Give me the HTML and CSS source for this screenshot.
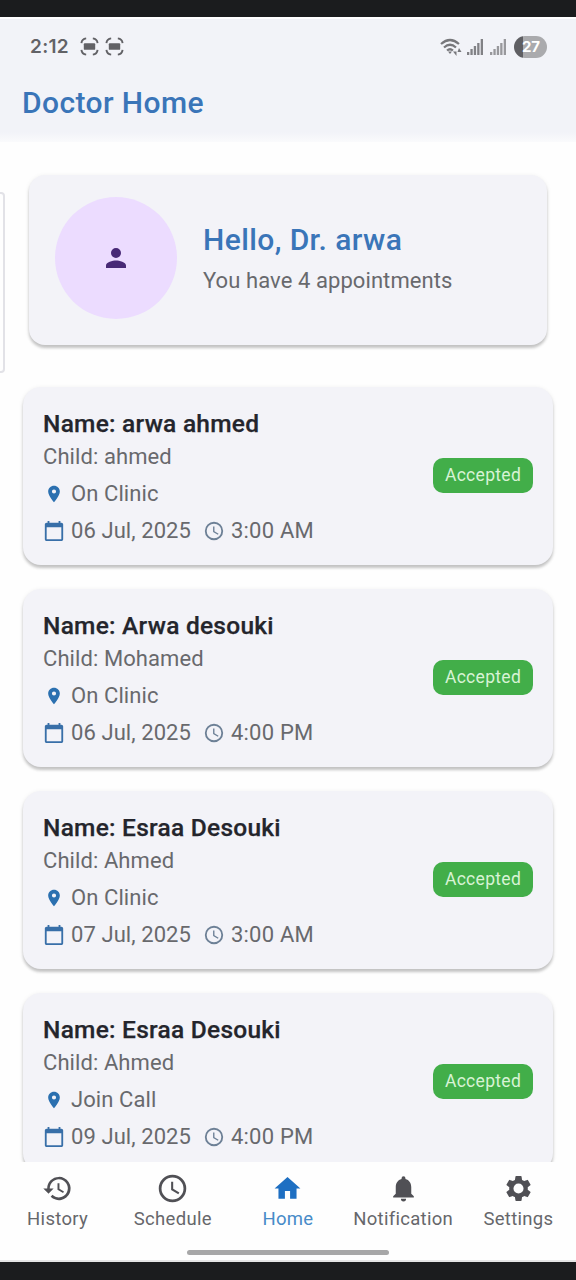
FILE: index.html
```html
<!DOCTYPE html>
<html lang="en">
<head>
<meta charset="utf-8">
<title>Doctor Home</title>
<link rel="stylesheet" href="styles.css">
</head>
<body>
<svg class="defs" width="0" height="0">
  <symbol id="pin" viewBox="0 0 24 24"><path d="M12 2C8.1 2 5 5.100 5 9c0 5.300 7 13 7 13s7-7.700 7-13c0-3.900-3.100-7-7-7zm0 9.500a2.500 2.500 0 1 1 0-5 2.500 2.500 0 0 1 0 5z"/></symbol>
  <symbol id="cal" viewBox="0 0 24 24"><path d="M20 3h-1V1h-2v2H7V1H5v2H4c-1.100 0-2 .9-2 2v16c0 1.100.9 2 2 2h16c1.100 0 2-.9 2-2V5c0-1.100-.9-2-2-2zm0 18H4V8h16v13z"/></symbol>
  <symbol id="clock" viewBox="0 0 24 24"><path d="M12 2a10 10 0 1 0 0 20 10 10 0 0 0 0-20zm0 18a8 8 0 1 1 0-16 8 8 0 0 1 0 16zm.5-13H11v6l5.200 3.200.8-1.300-4.500-2.700z"/></symbol>
  <symbol id="scan" viewBox="0 0 20 20"><path d="M1.500 6.500Q2 2 6.500 1.500M13.500 1.500Q18 2 18.500 6.500M1.500 13.500Q2 18 6.500 18.500M13.500 18.500Q18 18 18.500 13.500" fill="none" stroke="currentColor" stroke-width="2"/><rect x="4" y="6.500" width="12" height="7" rx="1"/></symbol>
  <symbol id="bars" viewBox="0 0 16 17"><path d="M0 14h2.300v3H0zM3.400 11h2.300v6H3.400zM6.800 8h2.300v9H6.800zM10.200 5h2.300v12h-2.300zM13.700 1H16v16h-2.300z"/></symbol>
</svg>
<div class="phone">
  <header class="top">
    <div class="status">
      <span class="time">2:12</span>
      <svg class="scan"><use href="#scan"/></svg>
      <svg class="scan"><use href="#scan"/></svg>
      <span class="grow"></span>
      <svg class="wifi" viewBox="0 0 22 18"><path d="M1 6Q10 -2 19 6M4 9.500Q10 4 16 9.500M7 12.500Q10 10 13 12.500" fill="none" stroke="currentColor" stroke-width="2.200"/><path d="M8 13.500h4l-2 2.500zM13 13.500h3.500v4.500zM19 10l2.500 4h-4z"/></svg>
      <svg class="bars"><use href="#bars"/></svg>
      <svg class="bars second"><use href="#bars"/></svg>
      <span class="battery">27</span>
    </div>
    <h1 class="title">Doctor Home</h1>
  </header>
  <main class="content">
    <div class="drawer-edge"></div>
    <section class="hello">
      <div class="avatar"><svg viewBox="0 0 24 24"><path d="M12 12a4 4 0 1 0 0-8 4 4 0 0 0 0 8zm0 2c-2.700 0-8 1.300-8 4v2h16v-2c0-2.700-5.300-4-8-4z"/></svg></div>
      <div><h2 class="greeting">Hello, Dr. arwa</h2><p class="count">You have 4 appointments</p></div>
    </section>
    <article class="card">
      <div class="info"><h3 class="name">Name: arwa ahmed</h3><p class="child">Child: ahmed</p>
        <p class="row place"><svg class="pin"><use href="#pin"/></svg><span>On Clinic</span></p>
        <p class="row"><svg class="cal"><use href="#cal"/></svg><span class="date">06 Jul, 2025</span><svg class="clock"><use href="#clock"/></svg><span class="hour">3:00 AM</span></p></div>
      <span class="badge">Accepted</span>
    </article>
    <article class="card">
      <div class="info"><h3 class="name">Name: Arwa desouki</h3><p class="child">Child: Mohamed</p>
        <p class="row place"><svg class="pin"><use href="#pin"/></svg><span>On Clinic</span></p>
        <p class="row"><svg class="cal"><use href="#cal"/></svg><span class="date">06 Jul, 2025</span><svg class="clock"><use href="#clock"/></svg><span class="hour">4:00 PM</span></p></div>
      <span class="badge">Accepted</span>
    </article>
    <article class="card">
      <div class="info"><h3 class="name">Name: Esraa Desouki</h3><p class="child">Child: Ahmed</p>
        <p class="row place"><svg class="pin"><use href="#pin"/></svg><span>On Clinic</span></p>
        <p class="row"><svg class="cal"><use href="#cal"/></svg><span class="date">07 Jul, 2025</span><svg class="clock"><use href="#clock"/></svg><span class="hour">3:00 AM</span></p></div>
      <span class="badge">Accepted</span>
    </article>
    <article class="card">
      <div class="info"><h3 class="name">Name: Esraa Desouki</h3><p class="child">Child: Ahmed</p>
        <p class="row place"><svg class="pin"><use href="#pin"/></svg><span>Join Call</span></p>
        <p class="row"><svg class="cal"><use href="#cal"/></svg><span class="date">09 Jul, 2025</span><svg class="clock"><use href="#clock"/></svg><span class="hour">4:00 PM</span></p></div>
      <span class="badge">Accepted</span>
    </article>
  </main>
  <nav class="nav">
    <a class="tab"><svg viewBox="0 0 24 24"><path d="M13 3a9 9 0 0 0-9 9H1l3.900 3.900.1.100L9 12H6a7 7 0 1 1 2.100 4.900l-1.400 1.400A9 9 0 1 0 13 3zm-1 5v5l4.300 2.500.7-1.200-3.500-2.100V8z"/></svg><span>History</span></a>
    <a class="tab"><svg class="large"><use href="#clock"/></svg><span>Schedule</span></a>
    <a class="tab active"><svg viewBox="0 0 24 24"><path d="M10 20v-6h4v6h5v-8h3L12 3 2 12h3v8z"/></svg><span>Home</span></a>
    <a class="tab solid"><svg viewBox="0 0 24 24"><path d="M12 22a2 2 0 0 0 2-2h-4a2 2 0 0 0 2 2zm6-6v-5c0-3.100-1.600-5.600-4.500-6.300V4a1.500 1.500 0 0 0-3 0v.7C7.600 5.400 6 7.900 6 11v5l-2 2v1h16v-1z"/></svg><span>Notification</span></a>
    <a class="tab solid"><svg viewBox="0 0 24 24"><path fill-rule="evenodd" d="M19.140 12.940c.04-.3.060-.61.060-.94s-.02-.64-.07-.94l2.030-1.580a.49.490 0 0 0 .12-.61l-1.920-3.320a.49.490 0 0 0-.59-.22l-2.390.96a7 7 0 0 0-1.620-.94l-.36-2.540a.48.480 0 0 0-.48-.41h-3.840a.48.480 0 0 0-.47.410l-.36 2.540c-.59.240-1.130.570-1.620.94l-2.390-.96a.48.480 0 0 0-.59.220L2.740 8.870a.48.480 0 0 0 .12.610l2.030 1.580a6 6 0 0 0-.02 1.880l-2.030 1.580a.49.490 0 0 0-.12.610l1.920 3.320c.12.220.37.290.59.220l2.390-.96c.5.380 1.030.7 1.620.94l.36 2.540c.05.240.24.410.48.410h3.840c.24 0 .44-.17.470-.41l.36-2.540a7 7 0 0 0 1.620-.94l2.390.96c.22.080.47 0 .59-.22l1.920-3.320a.48.480 0 0 0-.12-.61zM12 15.900a3.900 3.900 0 1 1 0-7.800 3.900 3.900 0 0 1 0 7.800z"/></svg><span>Settings</span></a>
  </nav>
  <div class="home-bar"><span></span></div>
</div>
</body>
</html>
```
FILE: styles.css
```css
* { box-sizing: border-box; }
body { margin: 0; background: #1b1c1e; font-family: Roboto, sans-serif; color: #68696d; }
h1, h2, h3, p { margin: 0; }
svg { fill: currentColor; flex: none; display: block; }
.defs { position: absolute; }
.phone { height: 1280px; border-top: 17px solid #1b1c1e; border-bottom: 18px solid #1b1c1e; background: #fefefe; display: flex; flex-direction: column; overflow: hidden; }
.top { height: 125px; flex: none; background: linear-gradient(#f2f3f8 113px, #fefefe 128px); border-top: 2px solid #fff; }
.status { height: 55px; padding: 0 29px 0 30px; display: flex; align-items: center; color: #626266; }
.time { font: 600 19px/24px Inter, sans-serif; width: 50px; white-space: nowrap; letter-spacing: .3px; }
.scan { width: 19px; height: 19px; margin-right: 6px; }
.grow { flex: 1; }
.wifi { width: 22px; height: 18px; margin-right: 5px; color: #77777b; }
.bars { width: 16px; height: 17px; margin-right: 7px; color: #818185; }
.bars.second { color: #98989c; margin-right: 8px; }
.battery { width: 33px; height: 22px; border-radius: 11px; background: linear-gradient(90deg, #5f5f63 27%, #aaaaad 28%); color: #fff; font: 700 15px/22px Inter, sans-serif; text-align: center; padding-left: 1px; }
.title { font-weight: 500; font-size: 30px; line-height: 34px; margin: 12px 0 0 22px; color: #3a75b8; letter-spacing: .4px; }
.content { flex: 1; min-height: 0; overflow: hidden; padding: 33px 23px 0; position: relative; }
.drawer-edge { position: absolute; left: -8px; top: 50px; width: 13px; height: 181px; border: 2px solid #e2e2e7; border-radius: 4px; }
.hello, .card { background: #f3f3f8; box-shadow: 0 3px 3px rgba(0, 0, 0, .2), 0 1px 5px rgba(0, 0, 0, .08); }
.hello { height: 170px; margin: 0 6px 42px; border-radius: 16px; display: flex; align-items: flex-start; padding: 22px 26px 0; }
.avatar { width: 122px; height: 122px; border-radius: 50%; background: #ecdcff; color: #482976; display: flex; align-items: center; justify-content: center; margin-right: 26px; }
.avatar svg { width: 30px; height: 30px; }
.greeting { font-weight: 500; font-size: 30px; line-height: 40px; margin-top: 23px; color: #3a75b8; letter-spacing: .4px; }
.count { font-size: 22px; line-height: 30px; margin-top: 6px; letter-spacing: .08px; }
.card { height: 178px; margin-bottom: 24px; border-radius: 18px; padding: 21px 20px 0 20px; display: flex; justify-content: space-between; }
.name { font-weight: 500; font-size: 24.500px; line-height: 32px; color: #24252c; letter-spacing: .25px; -webkit-text-stroke: .25px currentColor; }
.child, .row { font-size: 22px; letter-spacing: .08px; white-space: nowrap; }
.child { line-height: 34px; }
.row { height: 37px; line-height: 37px; display: flex; align-items: center; }
.place { margin-top: 1px; }
.pin { width: 22px; height: 20px; margin-right: 6px; color: #2b70b0; }
.cal { width: 22px; height: 22px; margin-right: 6px; color: #386fa8; }
.date { width: 132px; }
.clock { width: 22px; height: 22px; margin-right: 6px; color: #6d8096; }
.hour { letter-spacing: .2px; }
.badge { width: 100px; height: 35px; margin-top: 50px; border-radius: 10px; background: #42ae49; color: #d8f3d5; font-size: 17.500px; line-height: 35px; text-align: center; letter-spacing: .3px; }
.nav { height: 78px; flex: none; display: grid; grid-template-columns: repeat(5, 1fr); background: #fefefe; padding-top: 11px; }
.tab { display: flex; flex-direction: column; align-items: center; font-size: 18.500px; line-height: 24px; letter-spacing: .3px; color: #66676b; }
.tab svg { width: 31px; height: 31px; margin-bottom: 3px; color: #505055; }
.tab .large { width: 33px; height: 33px; margin: -1px 0 2px; }
.tab.active { color: #478bc8; }
.tab.active svg { color: #1e6fc2; }
.home-bar { height: 22px; flex: none; padding-top: 10px; border-bottom: 2px solid #e5e5e5; }
.home-bar span { display: block; width: 202px; height: 5px; margin: 0 auto; border-radius: 3px; background: #a7a7a8; }
```
